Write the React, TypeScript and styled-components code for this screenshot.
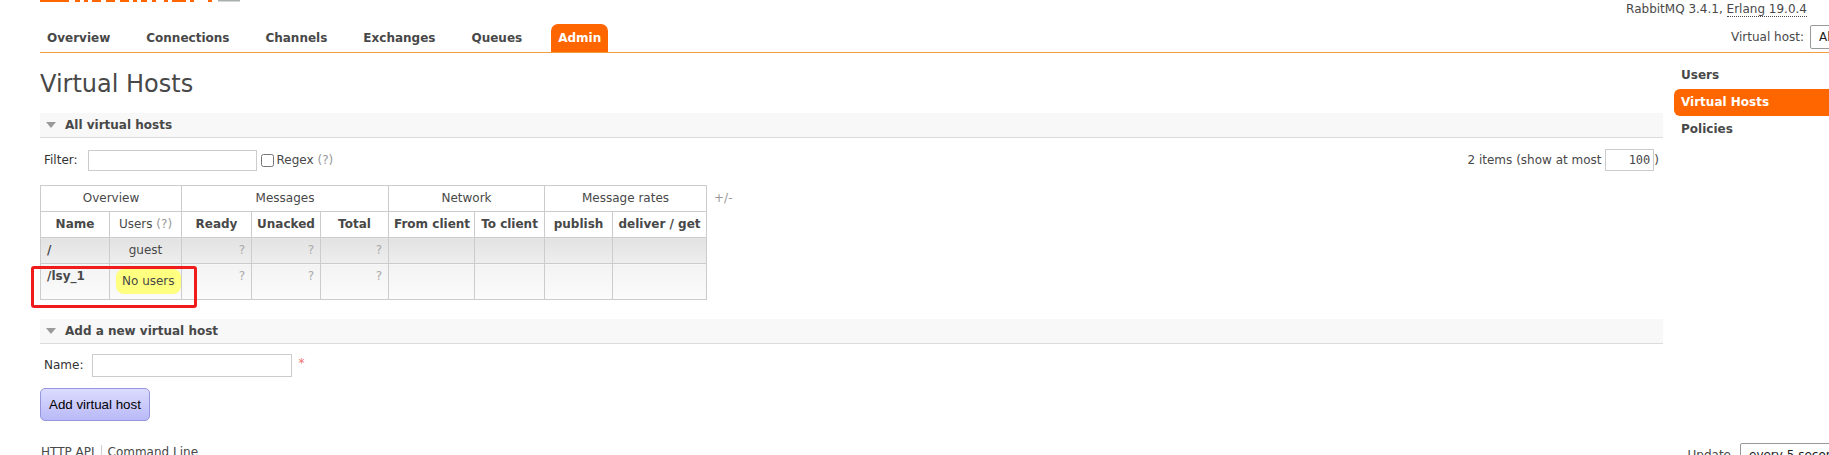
import React from "react";
import styled, { createGlobalStyle } from "styled-components";

const GlobalStyle = createGlobalStyle`
  html, body { margin: 0; padding: 0; overflow: hidden; background: #fff; }
  body {
    font-family: "DejaVu Sans", Verdana, sans-serif;
    font-size: 12px;
    line-height: 15px;
    color: #484848;
  }
  #root { width: 1829px; overflow: hidden; }
`;

const Page = styled.div`
  position: relative;
  width: 1890px;
  box-sizing: border-box;
  padding: 0 20px 0 40px;
`;

/* ---------- header ---------- */
const TopRow = styled.div`
  display: flex;
  justify-content: space-between;
  align-items: flex-start;
  height: 17px;
`;
const Logo = styled.svg`
  display: block;
`;
const Versions = styled.div`
  padding-top: 2px;
  margin-right: 63px;
  white-space: nowrap;
`;
const Abbr = styled.span`
  border-bottom: 1px dotted #484848;
`;
const MenuRow = styled.div`
  margin-top: 7px;
  display: flex;
  justify-content: space-between;
  align-items: center;
  border-bottom: 1px solid #f39b40;
  height: 28px;
`;
const NavList = styled.ul`
  display: flex;
  margin: 0;
  padding: 0;
  list-style: none;
  gap: 22px;
  align-self: flex-end;
`;
const NavLink = styled.a<{ $active?: boolean }>`
  display: block;
  height: 28px;
  line-height: 28px;
  padding: 0 7px;
  font-weight: bold;
  text-decoration: none;
  color: ${(p) => (p.$active ? "#fff" : "#484848")};
  background: ${(p) => (p.$active ? "#ff6600" : "transparent")};
  border-radius: 7px 7px 0 0;
`;
const VhostForm = styled.div`
  display: flex;
  align-items: center;
  gap: 6px;
  white-space: nowrap;
  margin-top: -2px;
`;
const Select = styled.select<{ $w: number }>`
  width: ${(p) => p.$w}px;
  height: 24px;
  border: 1px solid #999;
  border-radius: 2px;
  background: #fff;
  font-family: "DejaVu Sans", sans-serif;
  font-size: 12px;
  color: #222;
  padding: 0 4px;
`;

/* ---------- body ---------- */
const Body = styled.div`
  display: flex;
  align-items: flex-start;
`;
const Main = styled.main`
  flex: 1;
  min-width: 0;
`;
const Side = styled.ul`
  width: 196px;
  margin: 9px 0 0 11px;
  padding: 0;
  list-style: none;
`;
const SideLink = styled.a<{ $active?: boolean }>`
  display: block;
  height: 27px;
  line-height: 27px;
  padding: 0 7px;
  font-weight: bold;
  text-decoration: none;
  color: ${(p) => (p.$active ? "#fff" : "#484848")};
  background: ${(p) => (p.$active ? "#ff6600" : "transparent")};
  border-radius: 6px 0 0 6px;
`;

const Title = styled.h1`
  margin: 17px 0 15px;
  font-size: 24px;
  line-height: 28px;
  font-weight: normal;
  color: #484848;
`;

const SectionHead = styled.h2<{ $top?: number }>`
  margin: ${(p) => p.$top ?? 0}px 0 0;
  height: 24px;
  display: flex;
  align-items: center;
  gap: 9px;
  padding-left: 6px;
  background: #f8f8f8;
  border-bottom: 1px solid #dcdcdc;
  font-size: 12px;
  font-weight: bold;
  color: #484848;
`;
const Arrow = styled.svg`
  display: block;
`;

const FilterRow = styled.div`
  margin-top: 11px;
  display: flex;
  justify-content: space-between;
  align-items: center;
  padding: 0 4px;
  height: 22px;
`;
const Group = styled.div`
  display: flex;
  align-items: center;
  white-space: nowrap;
`;
const Label = styled.label`
  color: #333;
`;
const TextInput = styled.input<{ $w: number; $h: number; $ml?: number; $mono?: boolean }>`
  box-sizing: border-box;
  width: ${(p) => p.$w}px;
  height: ${(p) => p.$h}px;
  margin: 0 0 0 ${(p) => p.$ml ?? 0}px;
  border: 1px solid #cccccc;
  background: #fff;
  padding: 0 3px;
  font-family: ${(p) => (p.$mono ? '"DejaVu Sans Mono", monospace' : '"DejaVu Sans", sans-serif')};
  font-size: 12px;
  color: #484848;
  text-align: ${(p) => (p.$mono ? "right" : "left")};
`;
const Check = styled.input`
  width: 13px;
  height: 13px;
  margin: 0 3px 0 4px;
`;
const Help = styled.span`
  color: #999;
`;

const TableRow = styled.div`
  margin-top: 14px;
  display: flex;
  align-items: flex-start;
`;
const List = styled.table`
  width: 666px;
  table-layout: fixed;
  border-collapse: collapse;
`;
const Col = styled.col<{ $w: number }>`
  width: ${(p) => p.$w}px;
`;
const Th = styled.th<{ $bold?: boolean }>`
  border: 1px solid #cccccc;
  padding: 5px 5px;
  height: 15px;
  line-height: 15px;
  font-weight: ${(p) => (p.$bold ? "bold" : "normal")};
  text-align: center;
  white-space: nowrap;
  background: #fff;
  color: #484848;
`;
const Tr = styled.tr<{ $alt: 1 | 2 }>`
  & > td {
    background: ${(p) =>
      p.$alt === 1
        ? "linear-gradient(#e2e2e2, #eeeeee)"
        : "linear-gradient(#f3f3f3, #fbfbfb)"};
  }
`;
const Td = styled.td<{ $align?: "left" | "center" | "right"; $muted?: boolean; $bold?: boolean }>`
  border: 1px solid #cccccc;
  padding: 5px 6px;
  line-height: 15px;
  vertical-align: top;
  text-align: ${(p) => p.$align ?? "left"};
  color: ${(p) => (p.$muted ? "#aaaaaa" : "#484848")};
  font-weight: ${(p) => (p.$bold ? "bold" : "normal")};
  white-space: nowrap;
`;
const Pill = styled.span`
  display: inline-block;
  padding: 5px 6px;
  background: #ffff80;
  border-radius: 8px;
  color: #484848;
`;
const Toggle = styled.span`
  margin-left: 7px;
  padding-top: 6px;
  color: #999;
`;

const Callout = styled.div`
  position: absolute;
  left: 31px;
  top: 266px;
  width: 166px;
  height: 42px;
  box-sizing: border-box;
  border: 3px solid #f01c1c;
  border-radius: 3px;
  pointer-events: none;
`;

const NameRow = styled.div`
  margin-top: 10px;
  display: flex;
  align-items: flex-start;
  padding-left: 4px;
`;
const NameLabel = styled.label`
  color: #333;
  margin-top: 4px;
`;
const Required = styled.span`
  margin: 2px 0 0 6px;
  color: #f07070;
  font-size: 12px;
`;
const Button = styled.button`
  margin-top: 11px;
  display: block;
  padding: 8px 8px;
  border: 1px solid #9696df;
  border-radius: 5px;
  background: linear-gradient(#dcdcff, #b9b9f8);
  font-family: "Liberation Sans", Arial, sans-serif;
  font-size: 13.333px;
  color: #000;
`;

const Footer = styled.footer`
  margin-top: 22px;
  display: flex;
  justify-content: space-between;
  align-items: flex-start;
`;
const FooterLinks = styled.div`
  display: flex;
  padding-top: 2px;
`;
const FooterLink = styled.a<{ $sep?: boolean }>`
  color: #484848;
  text-decoration: none;
  padding: 0 ${(p) => (p.$sep ? 0 : 6)}px 0 ${(p) => (p.$sep ? 6 : 1)}px;
  border-left: ${(p) => (p.$sep ? "1px solid #cccccc" : "none")};
`;
const Update = styled.div`
  display: flex;
  align-items: flex-start;
  gap: 9px;
  white-space: nowrap;
`;
const UpdateLabel = styled.span`
  padding-top: 5px;
`;

const navItems = ["Overview", "Connections", "Channels", "Exchanges", "Queues", "Admin"];
const cols = [69, 72, 70, 69, 68, 86, 70, 68, 94];

function Triangle() {
  return (
    <Arrow width="10" height="6" viewBox="0 0 10 6">
      <polygon points="0,0 10,0 5,6" fill="#9a9a9a" />
    </Arrow>
  );
}

export default function App() {
  return (
    <>
      <GlobalStyle />
      <Page>
        <TopRow>
          <Logo width="201" height="3" viewBox="0 0 201 3">
            <rect x="0" y="0" width="29" height="2" fill="#ff6600" />
            <rect x="35" y="0" width="5" height="2" fill="#ff6600" />
            <rect x="44" y="0" width="4" height="2" fill="#ff6600" />
            <rect x="52" y="0" width="9" height="2" fill="#ff6600" />
            <rect x="66" y="0" width="9" height="2" fill="#ff6600" />
            <rect x="80" y="0" width="9" height="2" fill="#ff6600" />
            <rect x="93" y="0" width="4" height="2" fill="#ff6600" />
            <rect x="101" y="0" width="6" height="2" fill="#ff6600" />
            <rect x="112" y="0" width="4" height="2" fill="#ff6600" />
            <rect x="124" y="0" width="4" height="2" fill="#ff6600" />
            <rect x="132" y="0" width="14" height="2" fill="#ff6600" />
            <rect x="150" y="0" width="4" height="2" fill="#ff6600" />
            <rect x="168" y="0" width="4" height="2" fill="#ff6600" />
            <rect x="178" y="0" width="22" height="1.5" fill="#a8b0b0" />
          </Logo>
          <Versions>
            RabbitMQ 3.4.1, <Abbr>Erlang 19.0.4</Abbr>
          </Versions>
        </TopRow>
        <MenuRow>
          <NavList>
            {navItems.map((n) => (
              <li key={n}>
                <NavLink href="#" $active={n === "Admin"}>
                  {n}
                </NavLink>
              </li>
            ))}
          </NavList>
          <VhostForm>
            <span>Virtual host:</span>
            <Select $w={60} defaultValue="All">
              <option>All</option>
            </Select>
          </VhostForm>
        </MenuRow>

        <Body>
          <Main>
            <Title>Virtual Hosts</Title>
            <SectionHead>
              <Triangle />
              All virtual hosts
            </SectionHead>
            <FilterRow>
              <Group>
                <Label>Filter:</Label>
                <TextInput type="text" $w={169} $h={21} $ml={10} />
                <Check type="checkbox" />
                <span>
                  Regex <Help>(?)</Help>
                </span>
              </Group>
              <Group>
                <span>2 items (show at most&nbsp;</span>
                <TextInput type="text" $w={49} $h={22} $mono defaultValue="100" />
                <span>)</span>
              </Group>
            </FilterRow>

            <TableRow>
              <List>
                <colgroup>
                  {cols.map((w, i) => (
                    <Col key={i} $w={w} />
                  ))}
                </colgroup>
                <thead>
                  <tr>
                    <Th colSpan={2}>Overview</Th>
                    <Th colSpan={3}>Messages</Th>
                    <Th colSpan={2}>Network</Th>
                    <Th colSpan={2}>Message rates</Th>
                  </tr>
                  <tr>
                    <Th $bold>Name</Th>
                    <Th>
                      Users <Help>(?)</Help>
                    </Th>
                    <Th $bold>Ready</Th>
                    <Th $bold>Unacked</Th>
                    <Th $bold>Total</Th>
                    <Th $bold>From client</Th>
                    <Th $bold>To client</Th>
                    <Th $bold>publish</Th>
                    <Th $bold>deliver / get</Th>
                  </tr>
                </thead>
                <tbody>
                  <Tr $alt={1}>
                    <Td $bold>/</Td>
                    <Td $align="center">guest</Td>
                    <Td $align="right" $muted>?</Td>
                    <Td $align="right" $muted>?</Td>
                    <Td $align="right" $muted>?</Td>
                    <Td />
                    <Td />
                    <Td />
                    <Td />
                  </Tr>
                  <Tr $alt={2}>
                    <Td $bold>/lsy_1</Td>
                    <Td $align="center">
                      <Pill>No users</Pill>
                    </Td>
                    <Td $align="right" $muted>?</Td>
                    <Td $align="right" $muted>?</Td>
                    <Td $align="right" $muted>?</Td>
                    <Td />
                    <Td />
                    <Td />
                    <Td />
                  </Tr>
                </tbody>
              </List>
              <Toggle>+/-</Toggle>
            </TableRow>

            <SectionHead $top={19}>
              <Triangle />
              Add a new virtual host
            </SectionHead>
            <NameRow>
              <NameLabel>Name:</NameLabel>
              <TextInput type="text" $w={200} $h={23} $ml={9} />
              <Required>*</Required>
            </NameRow>
            <Button type="button">Add virtual host</Button>
          </Main>

          <Side>
            <li>
              <SideLink href="#">Users</SideLink>
            </li>
            <li>
              <SideLink href="#" $active>
                Virtual Hosts
              </SideLink>
            </li>
            <li>
              <SideLink href="#">Policies</SideLink>
            </li>
          </Side>
        </Body>

        <Footer>
          <FooterLinks>
            <FooterLink href="#">HTTP API</FooterLink>
            <FooterLink href="#" $sep>
              Command Line
            </FooterLink>
          </FooterLinks>
          <Update>
            <UpdateLabel>Update</UpdateLabel>
            <Select $w={130} defaultValue="every 5 seconds">
              <option>every 5 seconds</option>
            </Select>
          </Update>
        </Footer>

        <Callout />
      </Page>
    </>
  );
}
